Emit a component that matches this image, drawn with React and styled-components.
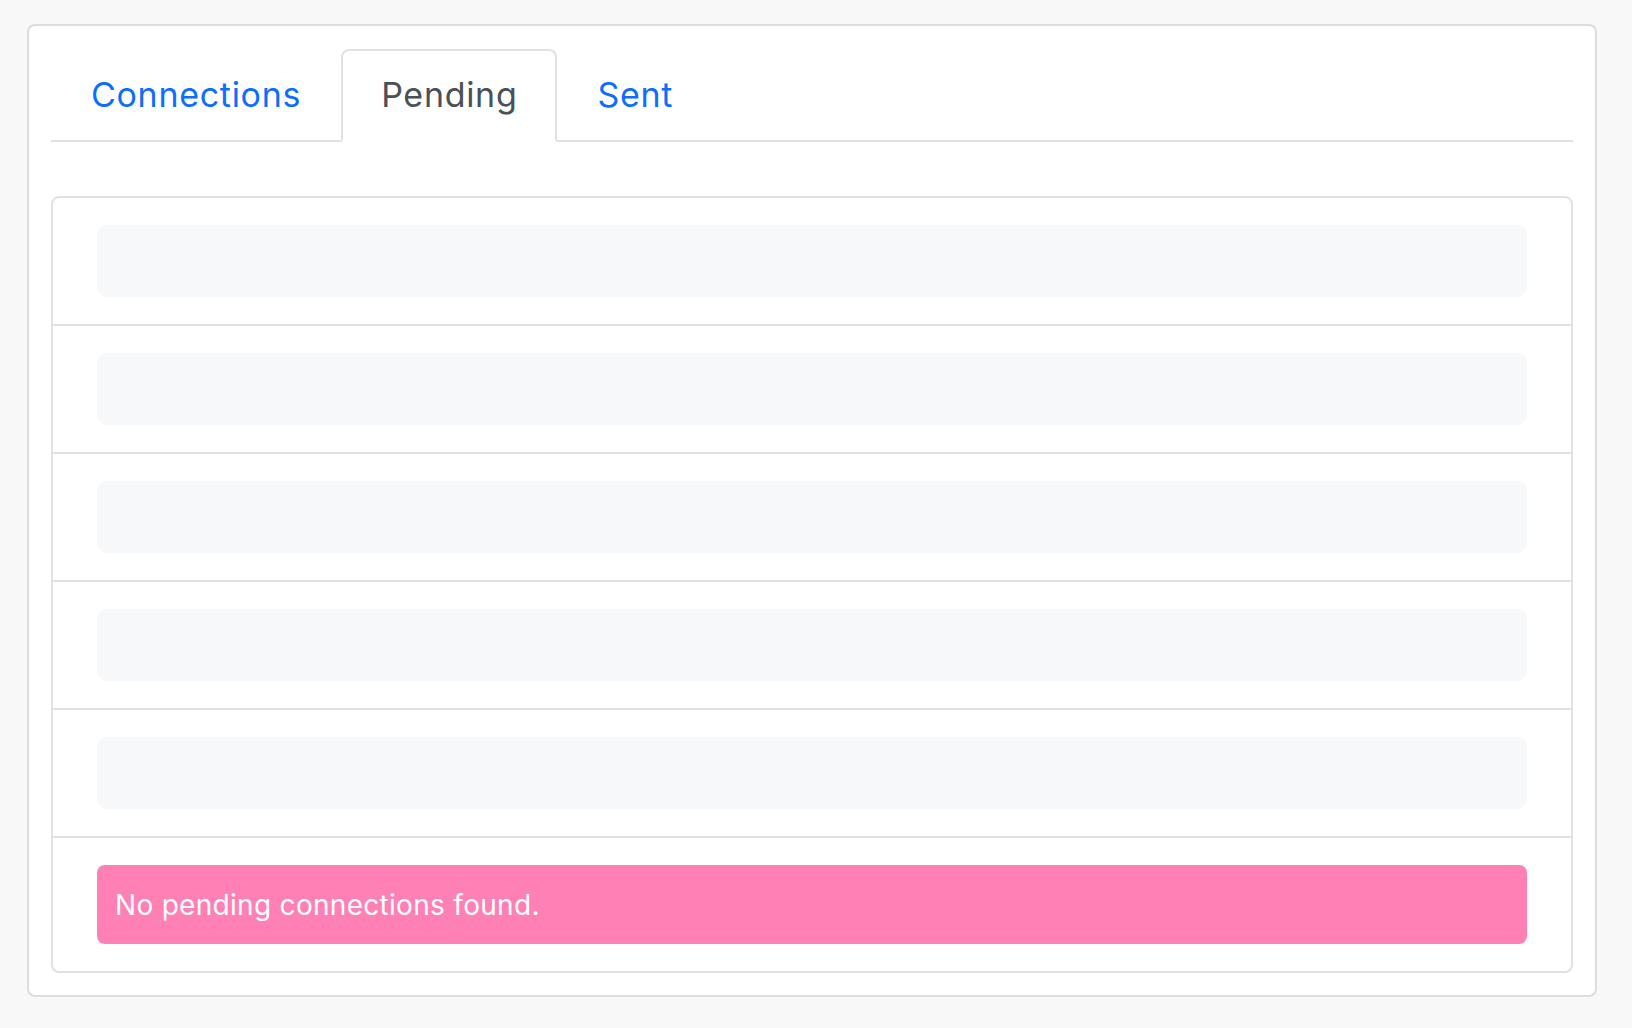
import styled, { createGlobalStyle } from 'styled-components';

const GlobalStyle = createGlobalStyle`
  html, body {
    margin: 0;
    padding: 0;
    background: #f8f8f8;
  }
  body {
    font-family: Inter, "Noto Sans", "Liberation Sans", sans-serif;
  }
  * {
    box-sizing: border-box;
  }
`;

const Page = styled.div`
  padding: 24px 35px 32px 27px;
  min-height: 1028px;
`;

const Card = styled.div`
  background: #fff;
  border: 2px solid #dcdde0;
  border-radius: 8px;
  padding: 23px 22px 22px 22px;
`;

const TabBar = styled.div`
  display: flex;
  border-bottom: 2px solid #dee2e6;
`;

const Tab = styled.div`
  padding: 0 38px;
  height: 93px;
  margin-bottom: -2px;
  display: flex;
  align-items: center;
  padding-bottom: 2px;
  font-size: 34px;
  letter-spacing: 0.7px;
  color: ${({ $active }) => ($active ? '#495057' : '#0d6efd')};
  background: ${({ $active }) => ($active ? '#fff' : 'transparent')};
  border: 2px solid ${({ $active }) => ($active ? '#dee2e6' : 'transparent')};
  border-bottom-color: ${({ $active }) => ($active ? '#fff' : 'transparent')};
  border-radius: 8px 8px 0 0;
  cursor: pointer;
`;

const List = styled.div`
  margin-top: 54px;
  border: 2px solid #dee2e6;
  border-radius: 8px;
`;

const Row = styled.div`
  padding: 27px 44px 27px 44px;
  border-bottom: 2px solid #dee2e6;

  &:last-child {
    border-bottom: none;
  }
`;

const Skeleton = styled.div`
  height: 72px;
  border-radius: 10px;
  background: #f7f8fa;
`;

const Alert = styled.div`
  height: 79px;
  display: flex;
  align-items: center;
  padding: 0 18px;
  border-radius: 8px;
  background: #fe80b4;
  color: #fff;
  font-size: 28px;
  letter-spacing: 0.3px;
`;

const tabs = ['Connections', 'Pending', 'Sent'];

export default function App() {
  return (
    <Page>
      <GlobalStyle />
      <Card>
        <TabBar>
          {tabs.map((t) => (
            <Tab key={t} $active={t === 'Pending'}>
              {t}
            </Tab>
          ))}
        </TabBar>
        <List>
          {[0, 1, 2, 3, 4].map((i) => (
            <Row key={i}>
              <Skeleton />
            </Row>
          ))}
          <Row>
            <Alert>No pending connections found.</Alert>
          </Row>
        </List>
      </Card>
    </Page>
  );
}
